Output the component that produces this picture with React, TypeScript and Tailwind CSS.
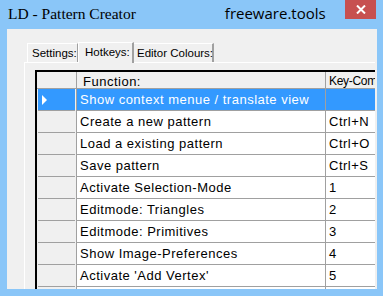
import React from "react";

const rows: [string, string][] = [
  ["Show context menue / translate view", ""],
  ["Create a new pattern", "Ctrl+N"],
  ["Load a existing pattern", "Ctrl+O"],
  ["Save pattern", "Ctrl+S"],
  ["Activate Selection-Mode", "1"],
  ["Editmode: Triangles", "2"],
  ["Editmode: Primitives", "3"],
  ["Show Image-Preferences", "4"],
  ["Activate 'Add Vertex'", "5"],
  ["", ""],
];

const ui = { fontFamily: '"Liberation Sans", Arial, sans-serif' };

const App: React.FC = () => {
  return (
    <div className="w-[383px] h-[296px] bg-[#8ac6f8] flex flex-col overflow-hidden">
      {/* title bar */}
      <div className="h-[29px] flex items-start shrink-0">
        <span
          className="ml-[8px] mt-[5px] text-[15.5px] leading-[18px] text-black whitespace-nowrap"
          style={{ fontFamily: '"Liberation Serif", "Times New Roman", serif' }}
        >
          LD - Pattern Creator
        </span>
        <span
          className="ml-[89px] mt-[4px] text-[15px] leading-[18px] text-black whitespace-nowrap"
          style={{ fontFamily: '"Open Sans", sans-serif' }}
        >
          freeware.tools
        </span>
        <div className="ml-auto mr-[7px] w-[31px] h-[19px] bg-[#c75050] flex items-center justify-center">
          <svg width="10" height="9" viewBox="0 0 10 9">
            <path d="M1 0.5 L9 8.5 M9 0.5 L1 8.5" stroke="white" strokeWidth="2" />
          </svg>
        </div>
      </div>

      {/* client */}
      <div className="mx-[7px] w-[370px] h-[260px] bg-[#f0f0f0] overflow-hidden pt-[12px] pl-[17px]" style={ui}>
        {/* tabs */}
        <div className="flex items-end h-[21px] pl-[3px] text-[11.5px] text-black whitespace-nowrap">
          <div className="h-[19px] w-[51px] border-t border-l border-white border-r border-r-[#a0a0a0] bg-[#f0f0f0] pl-[4px] leading-[19px]">
            Settings:
          </div>
          <div className="h-[21px] w-[56px] border-t border-l border-white border-r-2 border-r-[#a0a0a0] bg-[#f0f0f0] pl-[6px] leading-[19px] relative z-10 -mb-[1px]">
            Hotkeys:
          </div>
          <div className="h-[19px] w-[80px] border-t border-white border-r-2 border-r-[#a0a0a0] bg-[#f0f0f0] pl-[3px] leading-[19px]">
            Editor Colours:
          </div>
        </div>

        {/* tab page */}
        <div className="w-[351px] h-[230px] border-t border-l border-white pt-[7px] pl-[10px] overflow-hidden">
          <div className="w-[400px] h-[230px] border-t-2 border-l-2 border-black bg-[#f0f0f0] text-[13px] tracking-[0.5px] text-black whitespace-nowrap">
            {/* header */}
            <div className="flex h-[17px] border-b border-[#a0a0a0] bg-[#f0f0f0]">
              <div className="w-[40px] border-r border-[#a0a0a0]" />
              <div className="w-[249px] border-r border-[#a0a0a0] pl-[6px] leading-[19px]">Function:</div>
              <div className="flex-1 pl-[3px] leading-[19px] text-[12px] tracking-[-0.3px]">Key-Comb</div>
            </div>
            {rows.map(([fn, key], i) => {
              const sel = i === 0;
              return (
                <div key={i} className="flex h-[22px]">
                  <div className="w-[40px] border-r border-[#a0a0a0] px-[1px] flex">
                    <div
                      className={`flex-1 border-b border-[#a0a0a0] flex items-center pl-[4px] ${
                        sel ? "bg-[#3399ff]" : "bg-[#f0f0f0]"
                      }`}
                    >
                      {sel && (
                        <svg width="5" height="10" viewBox="0 0 5 10">
                          <path d="M0 0 L5 5 L0 10 Z" fill="white" />
                        </svg>
                      )}
                    </div>
                  </div>
                  <div
                    className={`w-[249px] border-r border-b border-[#a0a0a0] pl-[3px] leading-[21px] ${
                      sel ? "bg-[#3399ff] text-white" : "bg-white"
                    }`}
                  >
                    {fn}
                  </div>
                  <div
                    className={`flex-1 border-b border-[#a0a0a0] pl-[3px] leading-[21px] ${
                      sel ? "bg-[#3399ff] text-white" : "bg-white"
                    }`}
                  >
                    {key}
                  </div>
                </div>
              );
            })}
          </div>
        </div>
      </div>
      <div className="flex-1" />
    </div>
  );
};

export default App;
